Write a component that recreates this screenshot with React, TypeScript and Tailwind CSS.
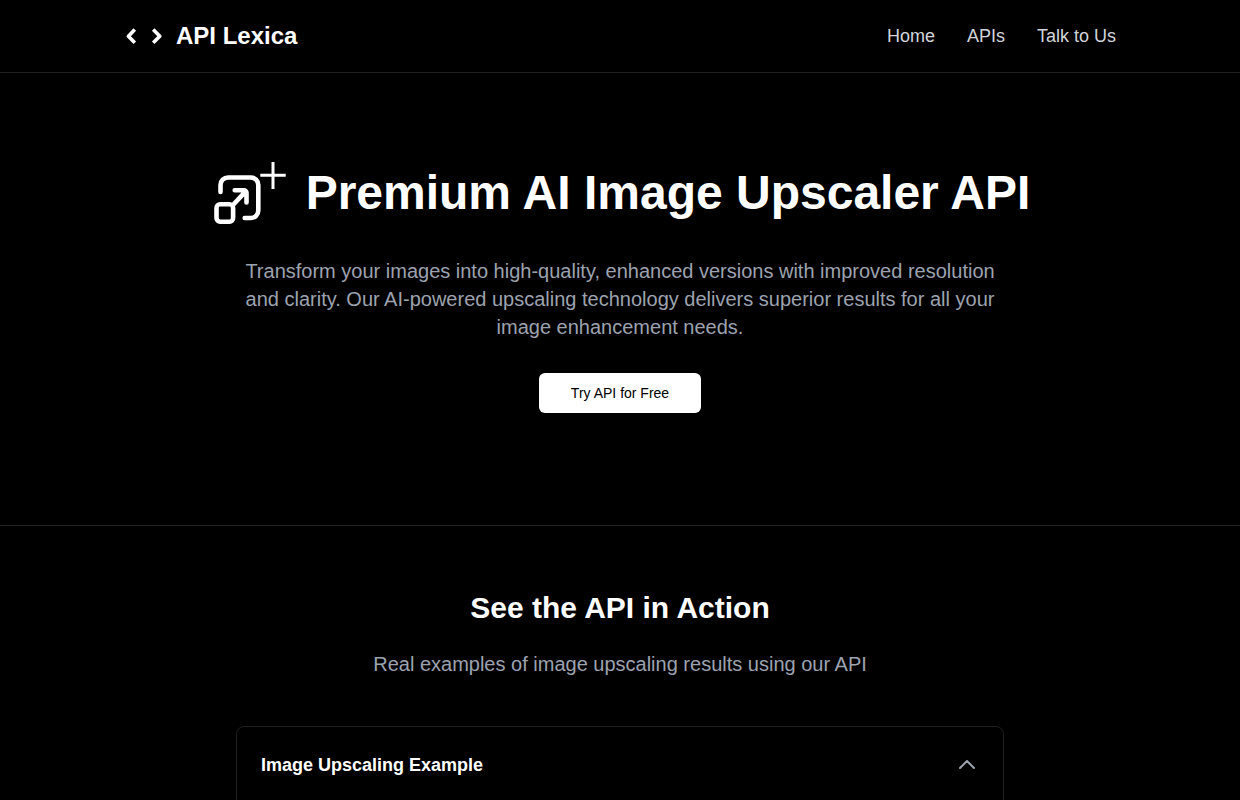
import { useState } from "react";

function LogoIcon() {
  return (
    <svg className="size-10" viewBox="0 0 40 40" fill="none" stroke="white" strokeWidth="3.6" strokeLinejoin="round" aria-hidden="true">
      <path d="M10.8 13.6L4.4 20.2L10.8 26.8" />
      <path d="M29.2 13.6L35.8 20.2L29.2 26.8" />
    </svg>
  );
}

function UpscaleIcon() {
  return (
    <svg className="size-20 shrink-0" viewBox="0 0 80 80" fill="none" stroke="white" aria-hidden="true">
      <g strokeWidth="4.6" strokeLinecap="round" strokeLinejoin="round">
        <path d="M10.5 39V32a7.5 7.5 0 0 1 7.5-7.5h22.8a7.5 7.5 0 0 1 7.5 7.5v25.5a7.5 7.5 0 0 1-7.5 7.5H34.7" />
        <rect x="6.5" y="51.3" width="16.6" height="17.4" rx="3.6" />
        <path d="M24.7 37.3H34a2.5 2.5 0 0 1 2.5 2.5V49.5M23 52L35.4 38.6" />
      </g>
      <path d="M63 9V36M50.3 22.3H75.7" strokeWidth="3" />
    </svg>
  );
}

const links = ["Home", "APIs", "Talk to Us"];

export default function App() {
  const [open, setOpen] = useState(true);

  return (
    <div className="min-h-screen bg-black font-['Liberation_Sans',Arial,sans-serif] text-white">
      <header className="border-b border-[#1f1f1f]">
        <div className="mx-auto flex max-w-5xl items-center justify-between px-4 py-4">
          <a href="#" className="flex items-center gap-3 text-2xl font-bold">
            <LogoIcon />
            API Lexica
          </a>
          <nav className="flex gap-8 text-lg text-[#d1d5db]">
            {links.map((label) => (
              <a key={label} href="#" className="hover:text-white">
                {label}
              </a>
            ))}
          </nav>
        </div>
      </header>

      <main>
        <section className="border-b border-[#1f1f1f] px-4 pt-20 pb-28 text-center">
          <div className="mb-6 flex items-center justify-center gap-4">
            <UpscaleIcon />
            <h1 className="text-5xl font-bold">Premium AI Image Upscaler API</h1>
          </div>
          <p className="mx-auto mb-8 max-w-3xl text-xl text-[#9ca3af]">
            Transform your images into high-quality, enhanced versions with improved resolution and clarity. Our
            AI-powered upscaling technology delivers superior results for all your image enhancement needs.
          </p>
          <button type="button" className="mx-auto flex h-10 items-center rounded-md bg-white px-8 text-sm text-black">
            Try API for Free
          </button>
        </section>

        <section className="px-4 py-16">
          <h2 className="mb-6 text-center text-3xl font-bold">See the API in Action</h2>
          <p className="mb-12 text-center text-xl text-[#9ca3af]">
            Real examples of image upscaling results using our API
          </p>
          <div className="mx-auto max-w-3xl rounded-lg border border-[#1f1f1f]">
            <button
              type="button"
              aria-expanded={open}
              onClick={() => setOpen(!open)}
              className="flex w-full items-center justify-between p-6 text-lg font-bold"
            >
              Image Upscaling Example
              <svg
                className={open ? "size-6 text-[#9ca3af]" : "size-6 rotate-180 text-[#9ca3af]"}
                viewBox="0 0 24 24"
                fill="none"
                stroke="currentColor"
                strokeWidth="2"
                strokeLinecap="round"
                strokeLinejoin="round"
                aria-hidden="true"
              >
                <path d="M5 15l7-7 7 7" />
              </svg>
            </button>
            {open && <div className="h-64" />}
          </div>
        </section>
      </main>
    </div>
  );
}
